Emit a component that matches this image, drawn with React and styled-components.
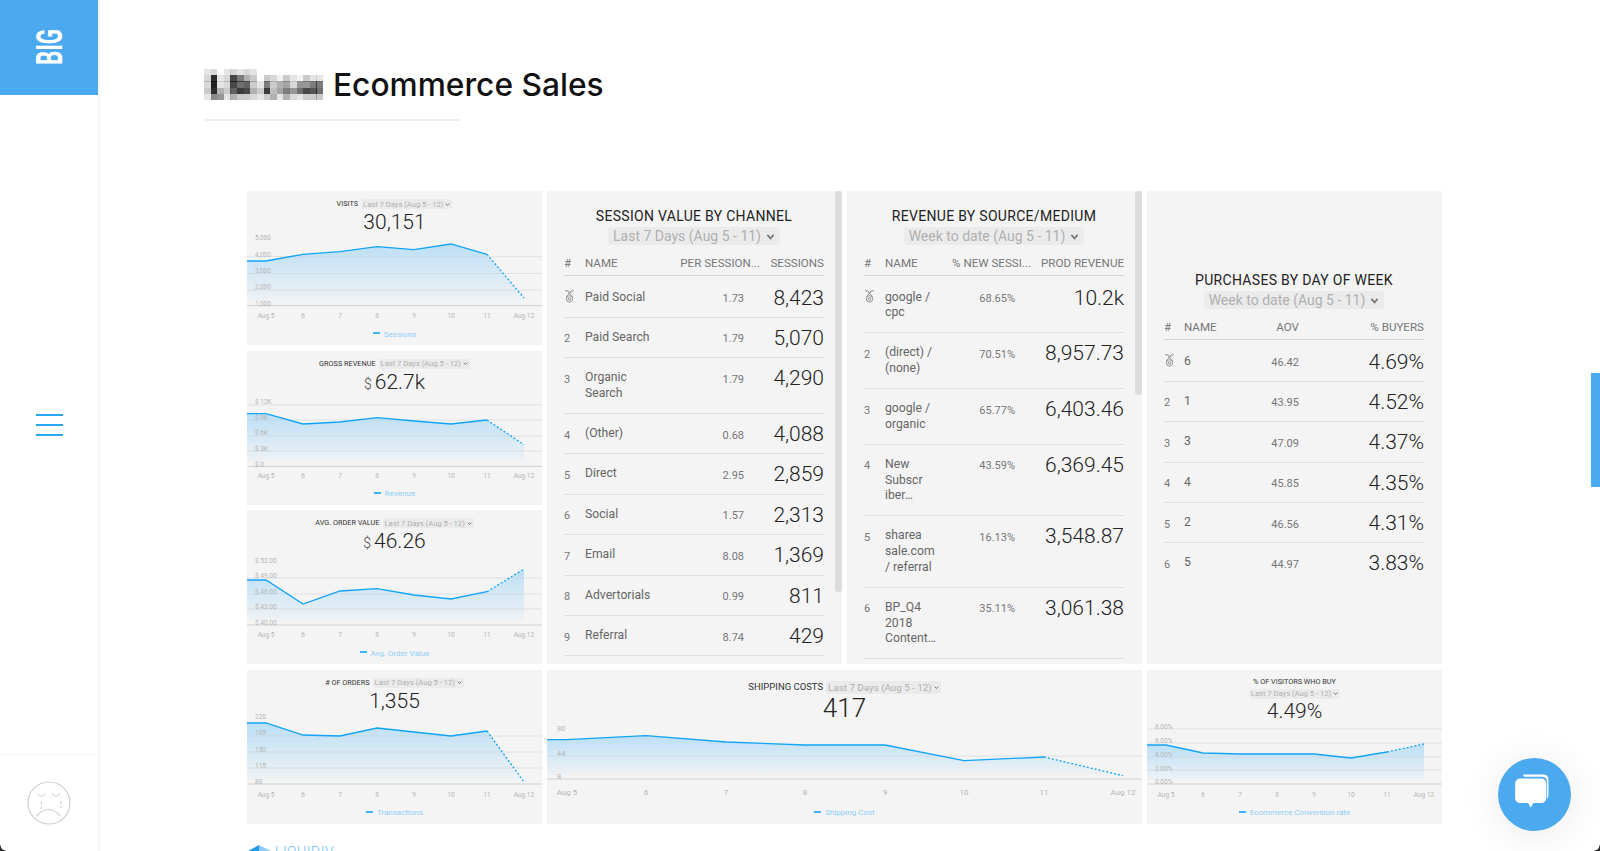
import React from "react";
import styled, { createGlobalStyle } from "styled-components";

const GlobalStyle = createGlobalStyle`
  html, body {
    margin: 0;
    padding: 0;
    height: 851px;
    overflow: hidden;
    background: #fff;
    font-family: Roboto, "Liberation Sans", sans-serif;
  }
  * { box-sizing: border-box; }
`;

const X = [19, 56, 93, 130, 167, 204, 240, 277];
const LABELS = ["Aug 5", "6", "7", "8", "9", "10", "11", "Aug 12"];

const visits = {
  id: "visits",
  y: [["5,000", 47], ["4,000", 63.5], ["3,000", 80], ["2,000", 96], ["1,000", 113]],
  grid: [65.7, 82.5, 99],
  axis: 114.7,
  line: [70, 63.3, 60.7, 55.7, 58.7, 53, 63.3, 107],
};
const revenue = {
  id: "revenue",
  y: [["$ 12K", 51], ["$ 9K", 66.7], ["$ 6K", 82], ["$ 3K", 97.7], ["$ 0", 113.3]],
  grid: [54, 69, 85, 100],
  axis: 115.3,
  line: [62.7, 73, 71, 66.7, 70, 73, 69, 93.7],
};
const orderValue = {
  id: "aov",
  y: [["$ 52.00", 50.7], ["$ 49.00", 66], ["$ 46.00", 81.7], ["$ 43.00", 97], ["$ 40.00", 112.7]],
  grid: [68, 84, 99],
  axis: 115,
  line: [70, 94, 81, 78.7, 85, 89, 81.7, 59],
};
const orders = {
  id: "orders",
  y: [["220", 47], ["185", 63], ["150", 80], ["115", 96], ["80", 112]],
  grid: [66, 82, 98],
  axis: 114,
  line: [53, 65, 66, 58, 62, 66, 61, 112],
};
const conversion = {
  id: "conv",
  y: [["8.00%", 56.7], ["6.00%", 70.7], ["4.00%", 84.7], ["2.00%", 98.7], ["0.00%", 112]],
  grid: [59, 73, 87, 100],
  axis: 114,
  line: [75, 83, 84, 84, 84, 88, 82, 74],
};
const shipping = {
  id: "shipping",
  width: 595,
  x: [20, 99, 179, 258, 338, 417, 497, 576],
  labelX: 10,
  fontSize: 8,
  axisFont: 7.5,
  labelY: 123,
  y: [["80", 59], ["44", 83.7], ["8", 106.7]],
  grid: [86],
  axis: 109,
  line: [69.7, 65.7, 72, 75, 75, 90.7, 87, 105.7],
};

const sessionRows = [
  ["Paid Social", "1.73", "8,423"],
  ["Paid Search", "1.79", "5,070"],
  [["Organic", "Search"], "1.79", "4,290"],
  ["(Other)", "0.68", "4,088"],
  ["Direct", "2.95", "2,859"],
  ["Social", "1.57", "2,313"],
  ["Email", "8.08", "1,369"],
  ["Advertorials", "0.99", "811"],
  ["Referral", "8.74", "429"],
];
const revenueRows = [
  [["google /", "cpc"], "68.65%", "10.2k"],
  [["(direct) /", "(none)"], "70.51%", "8,957.73"],
  [["google /", "organic"], "65.77%", "6,403.46"],
  [["New", "Subscr", "iber…"], "43.59%", "6,369.45"],
  [["sharea", "sale.com", "/ referral"], "16.13%", "3,548.87"],
  [["BP_Q4", "2018", "Content…"], "35.11%", "3,061.38"],
];
const buyerRows = [
  ["6", "46.42", "4.69%"],
  ["1", "43.95", "4.52%"],
  ["3", "47.09", "4.37%"],
  ["4", "45.85", "4.35%"],
  ["2", "46.56", "4.31%"],
  ["5", "44.97", "3.83%"],
];

const mosaic = [
  [0.1, 0.15, 0, 0.1, 0.15, 0.1, 0.15, 0.1, 0, 0, 0, 0, 0, 0, 0, 0, 0, 0],
  [0.15, 0.8, 0.1, 0.15, 0.7, 0.5, 0.3, 0.2, 0, 0.2, 0.15, 0.05, 0.2, 0.1, 0.05, 0.2, 0.1, 0.1],
  [0.15, 0.85, 0.1, 0.15, 0.7, 0.55, 0.6, 0.2, 0.1, 0.5, 0.2, 0.3, 0.35, 0.15, 0.4, 0.4, 0.5, 0.5],
  [0.2, 0.8, 0.3, 0.2, 0.6, 0.75, 0.7, 0.3, 0.2, 0.75, 0.25, 0.35, 0.5, 0.4, 0.55, 0.7, 0.65, 0.55],
  [0.1, 0.45, 0.4, 0.1, 0.3, 0.2, 0.2, 0.15, 0.1, 0.2, 0.3, 0.1, 0.3, 0.15, 0.1, 0.2, 0.2, 0.2],
];

const Page = styled.div`
  position: relative;
  display: flex;
  width: 1600px;
  height: 851px;
  overflow: hidden;
`;

const Sidebar = styled.aside`
  flex: 0 0 100px;
  display: flex;
  flex-direction: column;
  height: 851px;
  border-right: 2px solid #f6f6f6;
`;

const Logo = styled.div`
  flex: 0 0 95px;
  display: flex;
  align-items: center;
  justify-content: center;
  padding: 0 0 2px 3px;
  background: #4aa9ef;
  color: #fff;
  font-size: 36px;
  font-weight: 700;
  span {
    display: block;
    transform: rotate(-90deg) scaleX(0.62);
  }
`;

const MenuArea = styled.div`
  flex: 1;
  display: flex;
  flex-direction: column;
  align-items: center;
  justify-content: center;
  gap: 8px;
`;

const MenuLine = styled.div`
  width: 27px;
  height: 2px;
  background: #2aa8f5;
`;

const FaceArea = styled.div`
  flex: 0 0 97px;
  display: flex;
  align-items: center;
  justify-content: center;
  border-top: 1px solid #f3f3f3;
`;

const Main = styled.main`
  flex: 1;
  min-width: 0;
`;

const Header = styled.header`
  padding: 69px 0 0 105px;
  height: 191px;
`;

const Title = styled.h1`
  display: flex;
  align-items: center;
  gap: 10px;
  margin: 0 0 0 -1px;
  height: 31px;
  color: #111;
  font-family: Inter, Roboto, sans-serif;
  font-size: 31.7px;
  font-weight: 500;
`;

const TitleRule = styled.div`
  width: 256px;
  height: 2px;
  margin-top: 19px;
  background: #eeeeee;
`;

const Board = styled.div`
  display: grid;
  grid-template-columns: repeat(4, 295px);
  grid-template-rows: repeat(4, 154px);
  gap: 5.6px 5px;
  margin-left: 147px;
  width: 1195px;
`;

const Card = styled.section`
  display: flex;
  flex-direction: column;
  background: #f4f4f4;
  grid-column: ${(p) => p.$column || "auto"};
  overflow: hidden;
`;

const CardHead = styled.div`
  flex: 0 0 ${(p) => p.$height || 40}px;
  min-height: 0;
  display: flex;
  flex-direction: column;
  align-items: center;
  padding-top: ${(p) => p.$top || 8}px;
`;

const TitleRow = styled.div`
  display: flex;
  align-items: center;
  justify-content: center;
  gap: ${(p) => (p.$stack ? 2 : 3)}px;
  flex-direction: ${(p) => (p.$stack ? "column" : "row")};
`;

const CardTitle = styled.div`
  color: #333;
  font-size: ${(p) => p.$size || 7.3}px;
  font-weight: 400;
  line-height: 10px;
  white-space: nowrap;
`;

const Chip = styled.div`
  display: flex;
  align-items: center;
  gap: ${(p) => (p.$size > 10 ? 5 : 2)}px;
  padding: 0 ${(p) => (p.$size > 10 ? 5 : 2)}px;
  height: ${(p) => (p.$size > 10 ? 18 : p.$size > 8 ? 13 : 10)}px;
  border-radius: 2px;
  background: #ebebeb;
  color: #b0b0b0;
  font-size: ${(p) => p.$size || 7.6}px;
  font-weight: 400;
  white-space: nowrap;
`;

const BigValue = styled.div`
  display: flex;
  align-items: baseline;
  gap: 3px;
  margin-top: ${(p) => p.$gap ?? 2}px;
  color: #222;
  font-size: ${(p) => p.$size || 21}px;
  font-weight: 300;
  line-height: ${(p) => (p.$size > 21 ? 28 : 22)}px;
  small {
    color: #444;
    font-size: 14px;
  }
`;

const ChartSvg = styled.svg`
  display: block;
  flex: 0 0 auto;
`;

const Legend = styled.div`
  flex: 1;
  display: flex;
  align-items: center;
  justify-content: center;
  gap: 4px;
  color: #8fcdf6;
  font-size: 8px;
  font-weight: 400;
  &::before {
    content: "";
    width: 7px;
    height: 2px;
    margin-bottom: 2px;
    background: #3db4fb;
  }
`;

const TablePanel = styled.section`
  position: relative;
  grid-column: ${(p) => p.$column};
  grid-row: 1 / span 3;
  padding: ${(p) => p.$top || 16.5}px 18px 0 17px;
  background: #f4f4f4;
  overflow: hidden;
`;

const TableTitle = styled.h2`
  margin: 0 0 3.5px;
  color: #222;
  font-size: 14px;
  font-weight: 400;
  line-height: 16px;
  letter-spacing: 0.3px;
  text-align: center;
  white-space: nowrap;
`;

const ChipRow = styled.div`
  display: flex;
  justify-content: center;
`;

const Row = styled.div`
  display: grid;
  grid-template-columns: ${(p) => p.$columns};
  align-items: start;
  padding: 12px 0 11.4px;
  border-bottom: ${(p) => (p.$last ? "none" : "1px solid #dedede")};
`;

const HeadRow = styled(Row)`
  margin: 10px 0 1.5px;
  padding: 0 0 4px;
  border-bottom: 1px solid #d4d4d4;
  color: #777;
  font-size: 11.6px;
  line-height: 16px;
  white-space: nowrap;
`;

const HeadRight = styled.div`
  display: flex;
  justify-content: flex-end;
  white-space: nowrap;
`;

const Rank = styled.div`
  height: 16px;
  padding-top: 1.5px;
  color: #777;
  font-size: 11px;
  line-height: 16px;
  svg {
    display: block;
    margin-top: -1px;
  }
`;

const Name = styled.div`
  color: #666;
  font-size: 12.2px;
  line-height: 15.7px;
`;

const Metric = styled.div`
  height: 16px;
  padding: 1.5px ${(p) => p.$inset || 0}px 0 0;
  color: #777;
  font-size: 11px;
  line-height: 16px;
  text-align: right;
`;

const Amount = styled.div`
  color: #222;
  font-size: 21px;
  font-weight: 300;
  line-height: 16px;
  text-align: right;
  white-space: nowrap;
`;

const ScrollThumb = styled.div`
  position: absolute;
  top: 0;
  right: 0;
  width: 7px;
  height: ${(p) => p.$height}px;
  border-radius: 3px;
  background: #dcdcdc;
`;

const Footer = styled.footer`
  display: flex;
  align-items: flex-start;
  gap: 4px;
  margin: 21px 0 0 148px;
  color: #6dbcf1;
  font-size: 14px;
  font-weight: 300;
  line-height: 14px;
  letter-spacing: 0.5px;
`;

const EdgeTab = styled.div`
  position: absolute;
  top: 373px;
  right: 0;
  width: 9px;
  height: 114px;
  background: #4aa9ef;
`;

const ChatButton = styled.div`
  position: absolute;
  left: 1498px;
  top: 758px;
  display: flex;
  align-items: center;
  justify-content: center;
  width: 73px;
  height: 73px;
  border-radius: 50%;
  background: #4aa9ef;
  box-shadow: 0 4px 40px rgba(0, 0, 0, 0.09);
`;

const Corner = styled.div`
  position: absolute;
  bottom: 0;
  ${(p) => p.$side}: 0;
  width: 6px;
  height: 6px;
  background: radial-gradient(
    circle at ${(p) => (p.$side === "left" ? "100% 0" : "0 0")},
    transparent 5px,
    #2f2f2f 6px
  );
`;

const Chevron = ({ size = 5 }) => (
  <svg width={size} height={size} viewBox="0 0 10 10" fill="none" stroke="#777" strokeWidth="2">
    <path d="M1.5 3.2 5 7l3.5-3.8" />
  </svg>
);

const Medal = () => (
  <svg width="11" height="13" viewBox="0 0 11 13" fill="none" stroke="#8a8a8a" strokeWidth="0.9">
    <path d="M1 .8h2.4L8.6 6.8M10 .8H7.6L2.4 6.8M3.6.8 5.5 3.2 7.4.8" />
    <circle cx="5.5" cy="8.9" r="3.2" />
    <circle cx="5.5" cy="8.9" r="1.3" />
  </svg>
);

const Mosaic = () => (
  <svg width="119" height="31" viewBox="0 0 18 5" preserveAspectRatio="none" shapeRendering="crispEdges">
    {mosaic.map((cells, r) =>
      cells.map((v, c) => (
        <rect key={`${r}-${c}`} x={c} y={r} width="1.02" height="1.02" fill="#111" opacity={Math.min(1, v * 1.1)} />
      ))
    )}
  </svg>
);

const Chart = ({ data, top = 40 }) => {
  const {
    id,
    width = 295,
    x = X,
    labelX = 8,
    labelY = 125,
    fontSize = 6.5,
    axisFont = 6.5,
  } = data;
  const height = 132 - top;
  const pts = x.map((px, i) => [px, data.line[i]]);
  const solid = [[0, data.line[0]], ...pts.slice(0, 7)];
  const last = pts[7];
  const toLine = (list) => list.map((p) => p.join(",")).join(" ");
  const area = [...solid, last, [last[0], data.axis - 4], [0, data.axis - 4]];
  const minY = Math.min(...data.line);

  return (
    <ChartSvg width={width} height={height} viewBox={`0 ${top} ${width} ${height}`}>
      <defs>
        <linearGradient id={id} gradientUnits="userSpaceOnUse" x1="0" x2="0" y1={minY} y2={data.axis}>
          <stop offset="0" stopColor="#bcdff6" />
          <stop offset="1" stopColor="#f4f4f4" />
        </linearGradient>
      </defs>
      <polygon points={toLine(area)} fill={`url(#${id})`} />
      {data.grid.map((y) => (
        <line key={y} x1="0" x2={width} y1={y} y2={y} stroke="#c9d2d8" strokeOpacity="0.55" />
      ))}
      <line x1="0" x2={width} y1={data.axis} y2={data.axis} stroke="#d0d0d0" />
      {data.y.map(([t, y]) => (
        <text key={t} x={labelX} y={y + 2.3} fontSize={axisFont} fill="#b5b5b5">
          {t}
        </text>
      ))}
      {x.map((px, i) => (
        <text key={px} x={px} y={labelY + 2.3} fontSize={fontSize} fill="#b5b5b5" textAnchor="middle">
          {LABELS[i]}
        </text>
      ))}
      <polyline points={toLine(solid)} fill="none" stroke="#12a4f7" strokeWidth="1.3" />
      <polyline
        points={toLine([pts[6], last])}
        fill="none"
        stroke="#12a4f7"
        strokeWidth="1.3"
        strokeDasharray="2 2"
      />
    </ChartSvg>
  );
};

const MetricCard = ({ title, range, value, unit, legend, data }) => (
  <Card $column="1">
    <CardHead>
      <TitleRow>
        <CardTitle>{title}</CardTitle>
        <Chip>
          {range}
          <Chevron />
        </Chip>
      </TitleRow>
      <BigValue>
        {unit && <small>{unit}</small>}
        {value}
      </BigValue>
    </CardHead>
    <Chart data={data} />
    <Legend>{legend}</Legend>
  </Card>
);

const DataTable = ({ title, range, heads, columns, rows, inset, top, thumb, openEnd, column }) => (
  <TablePanel $top={top} $column={column}>
    <TableTitle>{title}</TableTitle>
    <ChipRow>
      <Chip $size={14}>
        {range}
        <Chevron size={9} />
      </Chip>
    </ChipRow>
    <HeadRow $columns={columns}>
      <div>#</div>
      <div>NAME</div>
      <HeadRight>{heads[0]}</HeadRight>
      <HeadRight>{heads[1]}</HeadRight>
    </HeadRow>
    {rows.map(([name, metric, amount], i) => (
      <Row key={i} $columns={columns} $last={openEnd && i === rows.length - 1}>
        <Rank>{i === 0 ? <Medal /> : i + 1}</Rank>
        <Name>
          {[].concat(name).map((part) => (
            <div key={part}>{part}</div>
          ))}
        </Name>
        <Metric $inset={inset}>{metric}</Metric>
        <Amount>{amount}</Amount>
      </Row>
    ))}
    {thumb && <ScrollThumb $height={thumb} />}
  </TablePanel>
);

export default function App() {
  return (
    <Page>
      <GlobalStyle />
      <Sidebar>
        <Logo>
          <span>BIG</span>
        </Logo>
        <MenuArea>
          <MenuLine />
          <MenuLine />
          <MenuLine />
        </MenuArea>
        <FaceArea>
          <svg width="44" height="44" viewBox="0 0 44 44" fill="none" stroke="#cfcfcf" strokeWidth="1.2">
            <circle cx="22" cy="22" r="21" />
            <path d="M10.5 12.5Q14.5 18 18.5 12.5M25 12.5Q29 18 33 12.5M9.5 35Q21.5 22 33.5 35" />
            <path d="M14.5 21v7M34 20v8" strokeDasharray="2.5 2" />
          </svg>
        </FaceArea>
      </Sidebar>

      <Main>
        <Header>
          <Title>
            <Mosaic />
            Ecommerce Sales
          </Title>
          <TitleRule />
        </Header>

        <Board>
          <MetricCard title="VISITS" range="Last 7 Days (Aug 5 - 12)" value="30,151" legend="Sessions" data={visits} />
          <DataTable
            column="2"
            title="SESSION VALUE BY CHANNEL"
            range="Last 7 Days (Aug 5 - 11)"
            heads={["PER SESSION...", "SESSIONS"]}
            columns="21px 1fr 80px 64px"
            rows={sessionRows}
            inset={16}
            thumb={401}
          />
          <DataTable
            column="3"
            title="REVENUE BY SOURCE/MEDIUM"
            range="Week to date (Aug 5 - 11)"
            heads={["% NEW SESSI...", "PROD REVENUE"]}
            columns="21px 1fr 78px 93px"
            rows={revenueRows}
            inset={16}
            thumb={204}
          />
          <DataTable
            column="4"
            title="PURCHASES BY DAY OF WEEK"
            range="Week to date (Aug 5 - 11)"
            heads={["AOV", "% BUYERS"]}
            columns="20px 1fr 48px 125px"
            rows={buyerRows}
            top={80.5}
            openEnd
          />
          <MetricCard
            title="GROSS REVENUE"
            range="Last 7 Days (Aug 5 - 12)"
            value="62.7k"
            unit="$"
            legend="Revenue"
            data={revenue}
          />
          <MetricCard
            title="AVG. ORDER VALUE"
            range="Last 7 Days (Aug 5 - 12)"
            value="46.26"
            unit="$"
            legend="Avg. Order Value"
            data={orderValue}
          />
          <MetricCard title="# OF ORDERS" range="Last 7 Days (Aug 5 - 12)" value="1,355" legend="Transactions" data={orders} />
          <Card $column="2 / span 2">
            <CardHead $height={50} $top={11}>
              <TitleRow>
                <CardTitle $size={9.5}>SHIPPING COSTS</CardTitle>
                <Chip $size={9.8}>
                  Last 7 Days (Aug 5 - 12)
                  <Chevron />
                </Chip>
              </TitleRow>
              <BigValue $size={26} $gap={0}>
                417
              </BigValue>
            </CardHead>
            <Chart data={shipping} top={50} />
            <Legend>Shipping Cost</Legend>
          </Card>
          <Card $column="4">
            <CardHead $height={50} $top={7}>
              <TitleRow $stack>
                <CardTitle>% OF VISITORS WHO BUY</CardTitle>
                <Chip>
                  Last 7 Days (Aug 5 - 12)
                  <Chevron />
                </Chip>
              </TitleRow>
              <BigValue $gap={1}>4.49%</BigValue>
            </CardHead>
            <Chart data={conversion} top={50} />
            <Legend>Ecommerce Conversion rate</Legend>
          </Card>
        </Board>

        <Footer>
          <svg width="23" height="22" viewBox="0 0 23 22">
            <path d="M0 6 11 0v22H0z" fill="#1f9bee" />
            <path d="M11 0l12 6v16H11z" fill="#8fcdf6" />
          </svg>
          LIQUIDIV
        </Footer>
      </Main>

      <EdgeTab />
      <ChatButton>
        <svg width="43" height="43" viewBox="0 0 40 40">
          <path
            d="M9 1.500h19c3.500 0 5 1.800 5 5v13c0 2-.3 3.500-1.300 4.500V8.500c0-3-1.700-5-5-5H10.500z"
            fill="#fff"
          />
          <path
            d="M7 5h19c3 0 5 2 5 5v13c0 3-2 5-5 5h-7l-2.500 4-2.500-4H7c-3 0-5-2-5-5V10c0-3 2-5 5-5z"
            fill="#fff"
          />
        </svg>
      </ChatButton>
      <Corner $side="left" />
      <Corner $side="right" />
    </Page>
  );
}
